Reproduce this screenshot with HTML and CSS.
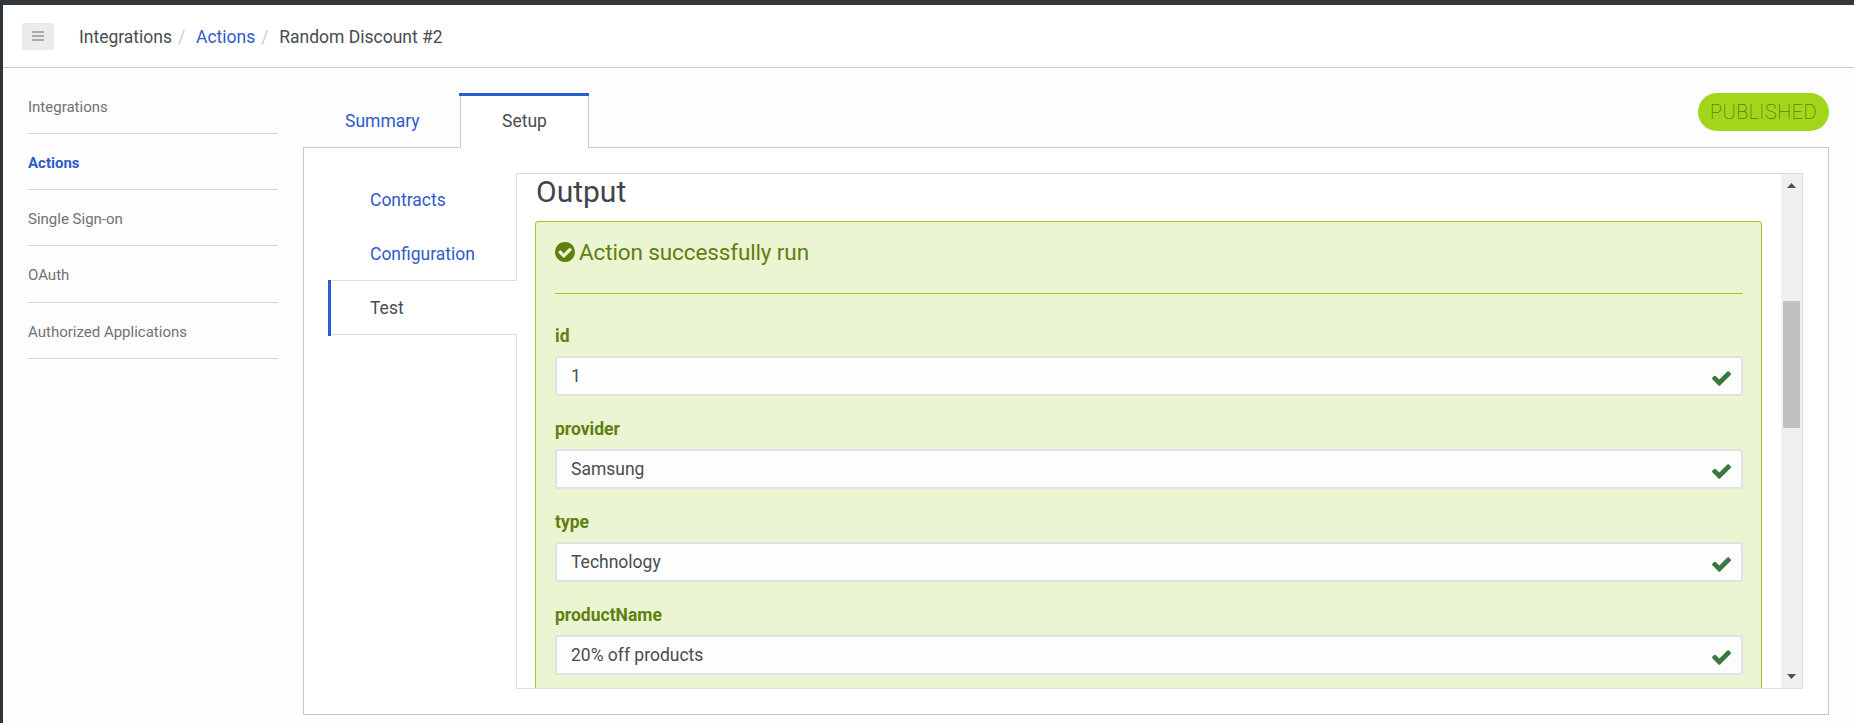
FILE: index.html
```html
<!DOCTYPE html>
<html lang="en">
<head>
<meta charset="utf-8">
<title>Random Discount #2</title>
<link rel="stylesheet" href="styles.css">
</head>
<body>
<header class="topbar">
  <button class="menu" aria-label="Menu"><span></span><span></span><span></span></button>
  <nav class="crumbs"><span>Integrations</span><i>/</i><a>Actions</a><i>/</i><span>Random Discount #2</span></nav>
</header>
<div class="body">
  <ul class="sidebar">
    <li>Integrations</li>
    <li class="current">Actions</li>
    <li>Single Sign-on</li>
    <li class="tall">OAuth</li>
    <li>Authorized Applications</li>
  </ul>
  <main class="main">
    <div class="tabbar">
      <div class="tab">Summary</div>
      <div class="tab active">Setup</div>
      <span class="badge">PUBLISHED</span>
    </div>
    <section class="panel">
      <nav class="steps">
        <a>Contracts</a>
        <a>Configuration</a>
        <a class="active">Test</a>
        <div class="rest"></div>
      </nav>
      <div class="pane">
        <div class="content">
          <h2>Output</h2>
          <div class="result">
            <h3><svg viewBox="128 128 1536 1536"><path d="M1412 734q0-28-18-46l-91-90q-19-19-45-19t-45 19l-408 407-226-226q-19-19-45-19t-45 19l-91 90q-18 18-18 46 0 27 18 45l362 362q19 19 45 19 27 0 46-19l543-543q18-18 18-45zm252 162q0 209-103 385.5t-279.5 279.5-385.5 103-385.5-103-279.5-279.5-103-385.5 103-385.5 279.5-279.5 385.5-103 385.5 103 279.5 279.5 103 385.5z"/></svg><span>Action successfully run</span></h3>
            <label>id</label>
            <div class="field">1<svg viewBox="121 334 1550 1188"><path d="M1671 566q0 40-28 68l-724 724-136 136q-28 28-68 28t-68-28l-136-136-362-362q-28-28-28-68t28-68l136-136q28-28 68-28t68 28l294 295 656-657q28-28 68-28t68 28l136 136q28 28 28 68z"/></svg></div>
            <label>provider</label>
            <div class="field">Samsung<svg viewBox="121 334 1550 1188"><path d="M1671 566q0 40-28 68l-724 724-136 136q-28 28-68 28t-68-28l-136-136-362-362q-28-28-28-68t28-68l136-136q28-28 68-28t68 28l294 295 656-657q28-28 68-28t68 28l136 136q28 28 28 68z"/></svg></div>
            <label>type</label>
            <div class="field">Technology<svg viewBox="121 334 1550 1188"><path d="M1671 566q0 40-28 68l-724 724-136 136q-28 28-68 28t-68-28l-136-136-362-362q-28-28-28-68t28-68l136-136q28-28 68-28t68 28l294 295 656-657q28-28 68-28t68 28l136 136q28 28 28 68z"/></svg></div>
            <label>productName</label>
            <div class="field">20% off products<svg viewBox="121 334 1550 1188"><path d="M1671 566q0 40-28 68l-724 724-136 136q-28 28-68 28t-68-28l-136-136-362-362q-28-28-28-68t28-68l136-136q28-28 68-28t68 28l294 295 656-657q28-28 68-28t68 28l136 136q28 28 28 68z"/></svg></div>
          </div>
        </div>
        <div class="scrollbar">
          <svg class="arrow" viewBox="0 0 9 5"><path d="M0 5 4.5 0 9 5z"/></svg>
          <div class="thumb"></div>
          <svg class="arrow down" viewBox="0 0 9 5"><path d="M0 0 4.5 5 9 0z"/></svg>
        </div>
      </div>
    </section>
  </main>
</div>
</body>
</html>
```
FILE: styles.css
```css
* { box-sizing: border-box; }
body {
  margin: 0;
  height: 723px;
  overflow: hidden;
  border-top: 5px solid #33383c;
  border-left: 3px solid #2f353c;
  background: #fdfdfd;
  color: #494c50;
  font: 17.5px/26px Roboto, sans-serif;
}
a { color: #2f5bca; }
.topbar {
  display: flex;
  align-items: center;
  height: 63px;
  padding: 0 19px 0;
  background: #fff;
  border-bottom: 1px solid #c8c8c8;
}
.menu {
  display: flex;
  flex-direction: column;
  align-items: center;
  gap: 2px;
  width: 32px;
  height: 27px;
  padding: 8px 0 0;
  border: 0;
  border-radius: 2px;
  background: #ebebeb;
}
.menu span { width: 12px; height: 2px; background: #aaa; }
.crumbs { display: flex; margin-left: 25px; padding-top: 2px; }
.crumbs i { width: 24px; padding-left: 6px; color: #ccc; font-style: normal; }
.body { display: flex; align-items: flex-start; }
.sidebar {
  width: 250px;
  margin: 10px 25px 0;
  padding: 0;
  list-style: none;
  font-size: 15px;
  color: #707274;
}
.sidebar li { height: 56px; line-height: 58px; border-bottom: 1px solid #d5d5d5; }
.sidebar .tall { height: 57px; }
.sidebar .current { color: #2f5bca; font-weight: 700; }
.main { width: 1526px; padding-top: 25px; }
.tabbar { display: flex; height: 54px; }
.tab { width: 156px; padding: 15px 0 0 42px; color: #2f5bca; }
.tab.active {
  z-index: 1;
  width: 130px;
  height: 55px;
  padding: 12px 0 0 1px;
  border-top: 3px solid #2d5dca;
  color: #494c50;
  text-align: center;
  background: linear-gradient(#c8c8c8, #c8c8c8) 1px 0 / 1px 100% no-repeat, linear-gradient(#c8c8c8, #c8c8c8) 100% 0 / 1px 100% no-repeat, #fff;
}
.tab.active { background-clip: padding-box; }
.badge {
  width: 131px;
  height: 38px;
  margin-left: auto;
  border-radius: 19px;
  background: #a1d61a;
  color: #456300;
  font-size: 20px;
  font-weight: 100;
  line-height: 38px;
  letter-spacing: 0.4px;
  text-align: center;
}
.panel {
  display: flex;
  height: 568px;
  padding: 25px;
  border: 1px solid #c8c8c8;
  background: #fff;
}
.steps { display: flex; flex-direction: column; width: 188px; }
.steps a { height: 53px; padding: 14px 0 0 41px; border-right: 1px solid #ddd; }
.steps a + a { height: 54px; padding-top: 15px; }
.steps a.active {
  position: relative;
  height: 55px;
  margin-left: -1px;
  padding: 14px 0 0 42px;
  border: solid #ddd;
  border-width: 1px 0;
  color: #494c50;
}
.steps .active::before {
  content: "";
  position: absolute;
  left: 0;
  top: -1px;
  width: 3px;
  height: 56px;
  background: #2d5dca;
}
.steps .rest { flex: 1; border-right: 1px solid #ddd; }
.pane {
  display: flex;
  flex: 1;
  border: 1px solid #ddd;
  border-left: 0;
  overflow: hidden;
}
.content { flex: 1; padding: 0 19px 0 18px; }
h2 { margin: 0; height: 47px; padding-left: 1px; color: #3f444d; font-size: 30px; font-weight: 400; line-height: 35px; }
.result {
  height: 520px;
  padding: 13px 18px 0 19px;
  border: 1px solid #9cca1f;
  border-radius: 3px;
  background: #ebf5d1;
}
h3 {
  display: flex;
  gap: 4px;
  height: 59px;
  margin: 0 0 29px;
  border-bottom: 1px solid #9cca1f;
  color: #5f7f12;
  font-size: 22.5px;
  font-weight: 400;
  line-height: 34px;
  letter-spacing: -0.12px;
}
h3 svg { width: 20px; height: 20px; margin-top: 7px; fill: #5f7f12; }
label { display: block; height: 33px; color: #5f7f12; font-weight: 700; }
.field {
  display: flex;
  align-items: center;
  justify-content: space-between;
  height: 40px;
  margin-bottom: 20px;
  padding: 0 10px 0 14px;
  border: 2px solid #dfe3e6;
  border-radius: 3px;
  background: #fdfdfd;
}
.field svg { width: 19px; height: 15px; margin-top: 5px; fill: #3b783f; }
.scrollbar { width: 21px; padding: 9px 2px; background: #f0f0f0; }
.arrow { display: block; width: 9px; height: 5px; margin: 0 0 113px 4px; fill: #505050; }
.thumb { width: 17px; height: 127px; background: #c1c1c1; }
.arrow.down { margin: 246px 0 0 4px; }
```
